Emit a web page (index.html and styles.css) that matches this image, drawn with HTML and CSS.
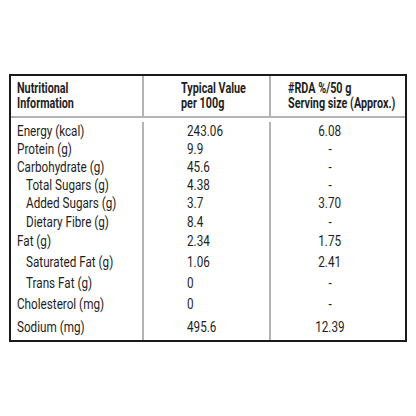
FILE: index.html
```html
<!DOCTYPE html>
<html>
<head>
<meta charset="utf-8">
<link rel="stylesheet" href="styles.css">
</head>
<body>
<div class="panel">
  <div class="row head">
    <div class="c1"><span class="t"><span class="ln">Nutritional</span><span class="ln">Information</span></span></div>
    <div class="c2"><span class="t"><span class="ln">Typical Value</span><span class="ln">per 100g</span></span></div>
    <div class="c3"><span class="t"><span class="ln">#RDA %/50 g</span><span class="ln">Serving size (Approx.)</span></span></div>
  </div>
  <div class="body">
    <div class="row h18"><div class="c1"><span class="t">Energy (kcal)</span></div><div class="c2"><span class="t">243.06</span></div><div class="c3"><span class="t">6.08</span></div></div>
    <div class="row h18"><div class="c1"><span class="t">Protein (g)</span></div><div class="c2"><span class="t">9.9</span></div><div class="c3"><span class="t">-</span></div></div>
    <div class="row h18"><div class="c1"><span class="t">Carbohydrate (g)</span></div><div class="c2"><span class="t">45.6</span></div><div class="c3"><span class="t">-</span></div></div>
    <div class="row h18"><div class="c1 sub"><span class="t">Total Sugars (g)</span></div><div class="c2"><span class="t">4.38</span></div><div class="c3"><span class="t">-</span></div></div>
    <div class="row h18"><div class="c1 sub"><span class="t">Added Sugars (g)</span></div><div class="c2"><span class="t">3.7</span></div><div class="c3"><span class="t">3.70</span></div></div>
    <div class="row h19"><div class="c1 sub"><span class="t">Dietary Fibre (g)</span></div><div class="c2"><span class="t">8.4</span></div><div class="c3"><span class="t">-</span></div></div>
    <div class="row h20"><div class="c1"><span class="t">Fat (g)</span></div><div class="c2"><span class="t">2.34</span></div><div class="c3"><span class="t">1.75</span></div></div>
    <div class="row h21"><div class="c1 sub"><span class="t">Saturated Fat (g)</span></div><div class="c2"><span class="t">1.06</span></div><div class="c3"><span class="t">2.41</span></div></div>
    <div class="row h21"><div class="c1 sub"><span class="t">Trans Fat (g)</span></div><div class="c2"><span class="t">0</span></div><div class="c3"><span class="t">-</span></div></div>
    <div class="row h21"><div class="c1"><span class="t">Cholesterol (mg)</span></div><div class="c2"><span class="t">0</span></div><div class="c3"><span class="t">-</span></div></div>
    <div class="row h22"><div class="c1"><span class="t">Sodium (mg)</span></div><div class="c2"><span class="t">495.6</span></div><div class="c3"><span class="t">12.39</span></div></div>
  </div>
</div>
</body>
</html>
```
FILE: styles.css
```css
html, body {
  margin: 0;
  padding: 0;
  background: #fff;
}
body {
  padding: 74px 0 0 9px;
  font-family: Roboto, "Liberation Sans", sans-serif;
  color: #1e1e1e;
}
.panel {
  width: 394px;
  height: 264px;
  border: 2px solid #1a1a1a;
  display: flex;
  flex-direction: column;
  overflow: hidden;
}
.row {
  display: grid;
  grid-template-columns: 133px 127px 134px;
}
.row > div {
  overflow: hidden;
}
.t {
  display: inline-block;
  white-space: nowrap;
  transform: scaleX(0.78);
  transform-origin: 0 50%;
}
.ln {
  display: block;
  height: 15px;
}
.head {
  height: 42px;
  box-sizing: border-box;
  border-bottom: 2px solid #b4b4b4;
  font-weight: 700;
  font-size: 15px;
  line-height: 15px;
}
.head .c1, .head .c2, .head .c3 {
  padding-top: 5px;
}
.head .t {
  transform: scaleX(0.72);
}
.body {
  flex: 1;
  padding-top: 4px;
  font-size: 15px;
  display: flex;
  flex-direction: column;
}
.body .c1, .body .c2, .body .c3 {
  display: flex;
  align-items: center;
}
.row .c1 {
  padding-left: 6px;
  border-right: 2px solid #b4b4b4;
}
.row .c2 {
  border-right: 2px solid #b4b4b4;
}
.head .c2 { padding-left: 37px; }
.head .c3 { padding-left: 17px; }
.body .c2 { padding-left: 43px; }
.body .c3 { justify-content: center; padding-right: 16px; }
.body .c3 .t { transform-origin: 50% 50%; }
.body .sub { padding-left: 15px; }
.h18 { height: 18px; }
.h19 { height: 19px; }
.h20 { height: 20px; }
.h21 { height: 21px; }
.h22 { height: 21px; }
.body .row:last-child { flex: 1; }
```
